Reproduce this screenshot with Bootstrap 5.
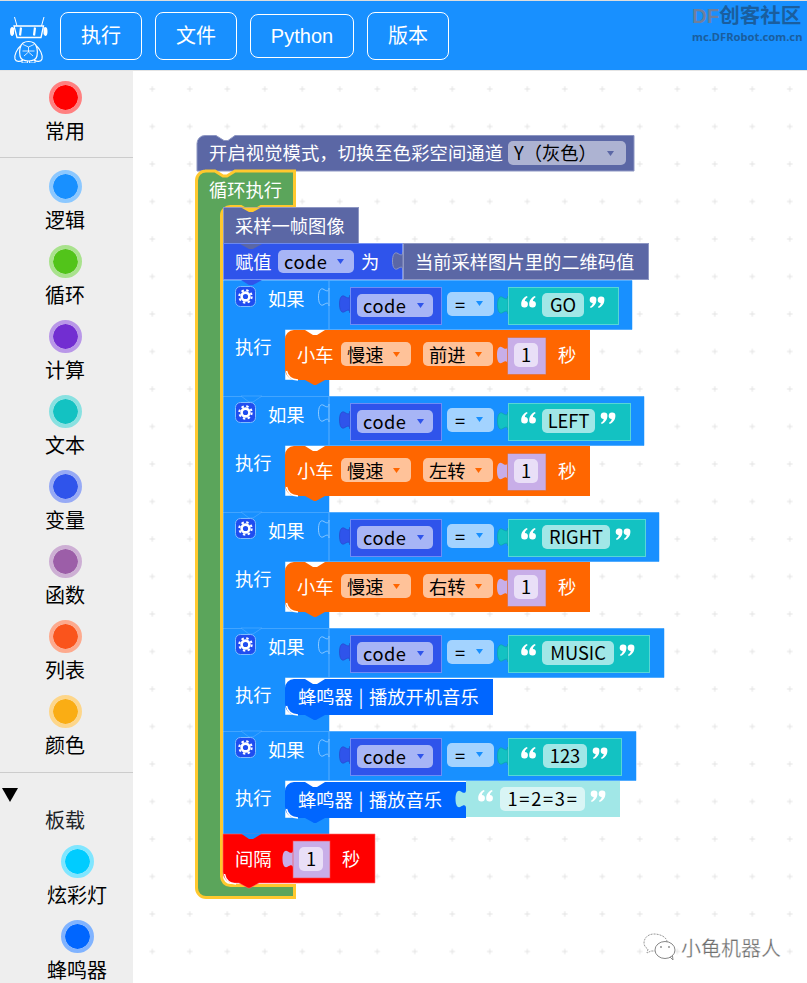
<!DOCTYPE html>
<html lang="zh">
<head>
<meta charset="utf-8">
<title>Mind+</title>
<link href="https://cdn.jsdelivr.net/npm/bootstrap@5.3.0/dist/css/bootstrap.min.css" rel="stylesheet">
<style>
html,body{height:983px;overflow:hidden;background:#fff}
body{font-family:"Liberation Sans","Noto Sans CJK SC",sans-serif;border-top:1px solid #ddd}
.topbar{height:69px;background:#1890ff;border-bottom:0;padding:0;flex-wrap:nowrap;position:relative}
.brand-logo{width:40px;height:50px;margin:5px 11px 0 9px;flex:none;display:block}
.tool-btn{font-size:20px;color:#fff;border:1px solid #fff;border-radius:8px;height:48px;width:82px;padding:0;background:#1890ff;line-height:46px;margin-right:13px;flex:none}
.tool-btn.py{width:104px;height:44px;line-height:42px}
.wm-box{position:absolute;left:692px;top:2px;line-height:1;white-space:nowrap;font-weight:700}
.wm-title{font-size:20.5px;color:#1a5e9e;line-height:26px}
.wm-title b{color:#6f7f9c}
.wm-sub{font-size:11.2px;color:#1a5e9e;margin-top:2px;font-family:"Noto Sans","Liberation Sans",sans-serif}
.main-row{height:913px;border-top:1px solid #e4e4e4}
.cat-side{width:133px;height:913px;background:#eee;overflow:hidden;flex:none}
.cat-item{height:75px;padding:9.5px 3px 0 0;text-align:center;color:#000}
.cat-item.sub{padding-left:24px}
.cat-dot{display:block;width:33px;height:33px;border-radius:50%;border:4px solid;margin:0 auto 2.5px;background-clip:padding-box}
.cat-label{display:block;font-size:20px;line-height:30px;white-space:nowrap;font-family:"Noto Sans CJK SC",sans-serif}
.cat-line{height:1px;background:#ccc}
.gap-first{margin:11px 0 2px}
.gap-second{margin-top:12px}
.cat-tri{width:0;height:0;border-left:8px solid transparent;border-right:8px solid transparent;border-top:14px solid #000;margin:15px 0 3px 2px}
.board-label{text-align:center;font-size:20px;line-height:30px;padding-right:3px;font-family:"Noto Sans CJK SC",sans-serif}
.d1{background-color:#f00;border-color:#ff8080}
.d2{background-color:#1890ff;border-color:#8cc8ff}
.d3{background-color:#52c41a;border-color:#a9e28d}
.d4{background-color:#722ed1;border-color:#b997e8}
.d5{background-color:#13c2c2;border-color:#89e1e1}
.d6{background-color:#2f54eb;border-color:#97aaf5}
.d7{background-color:#9c5ea8;border-color:#cdafd4}
.d8{background-color:#fa541c;border-color:#fdaa8e}
.d9{background-color:#faad14;border-color:#fdd68a}
.d10{background-color:#0cf;border-color:#80e6ff}
.d11{background-color:#06f;border-color:#80b3ff}
.canvas-wrap{flex:1 1 auto;min-width:0;height:913px;position:relative;background:#fff}
.canvas-svg{display:block;width:674px;height:913px}
.bt{font:18.3px "Noto Sans CJK SC",sans-serif;fill:#fff;word-spacing:1.5px}
.ft{font:18.3px "Noto Sans CJK SC",sans-serif;fill:#000;text-anchor:middle}
.fl{font:18.3px "Noto Sans CJK SC",sans-serif;fill:#000}
.codeword{letter-spacing:.5px}
.wide-eq{letter-spacing:1.7px}
.wm-text{font:20px "Noto Sans CJK SC",sans-serif;fill:#707070;stroke:#fff;stroke-width:.25}
</style>
</head>
<body class="m-0">
<nav class="navbar topbar d-flex justify-content-start align-items-center">
  <svg class="brand-logo" viewBox="0 0 40 50" fill="none" stroke="#fff" stroke-width="1.2" aria-label="logo">
    <path d="M5.500 4 8 13M35 4 32.500 13" stroke-width="1"/>
    <path d="M5 13H34.500L32 24.500H8Z" stroke-width="1.300"/>
    <path d="M3.500 14C1.500 14 1 16 1 18.500S1.500 23 3.500 23L5 21V15ZM36 14C38 14 38.500 16 38.500 18.500S38 23 36 23L34.500 21V15Z" fill="#fff" stroke="none"/>
    <path d="M12 14.500 11 22.500M26 14.500 25 22.500" stroke-width="2.200"/>
    <path d="M14 30C11 32 10 38 11 43 12 47 15 48 19.500 48S27 47 28 43C29 38 28 32 25 30 22 28 17 28 14 30Z"/>
    <path d="M14 31.500 19.500 34 25 31.500M13.500 38H25.500M15 43 19.500 39 24 43M19.500 34V39" stroke-width=".8"/>
    <path d="M11.500 33C8 36 5 42 6 46 7 49 11 49 14 47M27.500 33C31 36 34 42 33 46 32 49 28 49 25 47"/>
    <path d="M13 47V50H18.500V48M26 47V50H20.500V48" stroke-width=".9"/>
  </svg>
  <button type="button" class="btn tool-btn">执行</button>
  <button type="button" class="btn tool-btn">文件</button>
  <button type="button" class="btn tool-btn py">Python</button>
  <button type="button" class="btn tool-btn">版本</button>
  <div class="wm-box"><div class="wm-title"><b>DF</b>创客社区</div><div class="wm-sub">mc.DFRobot.com.cn</div></div>
</nav>
<div class="d-flex main-row">
  <aside class="cat-side">
    <div class="cat-item"><span class="cat-dot d1"></span><span class="cat-label">常用</span></div>
    <div class="cat-line gap-first"></div>
    <div class="cat-item"><span class="cat-dot d2"></span><span class="cat-label">逻辑</span></div>
    <div class="cat-item"><span class="cat-dot d3"></span><span class="cat-label">循环</span></div>
    <div class="cat-item"><span class="cat-dot d4"></span><span class="cat-label">计算</span></div>
    <div class="cat-item"><span class="cat-dot d5"></span><span class="cat-label">文本</span></div>
    <div class="cat-item"><span class="cat-dot d6"></span><span class="cat-label">变量</span></div>
    <div class="cat-item"><span class="cat-dot d7"></span><span class="cat-label">函数</span></div>
    <div class="cat-item"><span class="cat-dot d8"></span><span class="cat-label">列表</span></div>
    <div class="cat-item"><span class="cat-dot d9"></span><span class="cat-label">颜色</span></div>
    <div class="cat-line gap-second"></div>
    <div class="cat-tri"></div>
    <div class="board-label">板载</div>
    <div class="cat-item sub"><span class="cat-dot d10"></span><span class="cat-label">炫彩灯</span></div>
    <div class="cat-item sub"><span class="cat-dot d11"></span><span class="cat-label">蜂鸣器</span></div>
  </aside>
  <div class="canvas-wrap">
    <svg class="canvas-svg" viewBox="133 71 674 913" xmlns="http://www.w3.org/2000/svg">
      <defs>
        <pattern id="gridp" x="133.55" y="70.25" width="37.5" height="37.5" patternUnits="userSpaceOnUse">
          <path d="M16 18.750H21.500M18.750 16V21.500" stroke="#e4e4e4" stroke-width="1"/>
        </pattern>
        <path id="tab" d="M0 0C0 4-3 3-5 1.500-9-1-10.500 4-10.500 9S-9 19-5 16.500C-3 15 0 14 0 18Z"/>
        <symbol id="qL" viewBox="0 0 16 12" overflow="visible">
          <path d="M3.400 11.500A3.200 3.200 0 0 1 .2 8.200C.2 4.500 2.500 1.200 6 0L6.600 1.200C4.800 2.300 4 3.500 3.900 5A3.200 3.200 0 0 1 3.400 11.500ZM11.400 11.500A3.200 3.200 0 0 1 8.200 8.200C8.200 4.500 10.500 1.200 14 0L14.600 1.200C12.800 2.300 12 3.500 11.900 5A3.200 3.200 0 0 1 11.400 11.500Z" fill="#fff"/>
        </symbol>
        <symbol id="qR" viewBox="0 0 16 12" overflow="visible">
          <path d="M11.200 .5A3.200 3.200 0 0 1 14.400 3.800C14.400 7.500 12.100 10.800 8.600 12L8 10.800C9.800 9.700 10.600 8.500 10.700 7A3.200 3.200 0 0 1 11.200 .5ZM3.200 .5A3.200 3.200 0 0 1 6.400 3.800C6.400 7.500 4.100 10.800 .6 12L0 10.800C1.800 9.700 2.600 8.500 2.700 7A3.200 3.200 0 0 1 3.200 .5Z" fill="#fff"/>
        </symbol>
        <g id="gear">
          <rect x="235.500" y="286.500" width="20" height="20" rx="5" fill="#1f4df0" stroke="#7fbcff"/>
          <circle cx="245.500" cy="296.500" r="6.200" fill="none" stroke="#fff" stroke-width="2" stroke-dasharray="2.400 2.470"/>
          <circle cx="245.500" cy="296.500" r="3.900" fill="none" stroke="#fff" stroke-width="2.600"/>
        </g>
        <g id="ifcommon">
          <use href="#gear"/>
          <text class="bt" x="268" y="305.500">如果</text>
          <text class="bt" x="235" y="353.500">执行</text>
          <use href="#tab" x="329" y="288" fill="#1890ff" stroke="#8fcbff"/>
          <path d="M329 280.500V329" stroke="#59aeff" fill="none"/>
          <use href="#tab" x="350" y="295" fill="#2f54eb" stroke="#2748c8" stroke-width=".7"/>
          <rect x="350.500" y="287.500" width="91" height="37" fill="#2f54eb" stroke="#6f8df5"/>
          <rect x="357" y="294" width="76" height="23" rx="5" fill="#a7b5f6"/>
          <text class="fl codeword" x="363" y="312.500">code</text>
          <path d="M417 303H424L420.500 308Z" fill="#2f54eb"/>
          <rect x="447" y="292" width="47" height="24" rx="5" fill="#a3d3ff"/>
          <text class="fl" x="455" y="311.500">=</text>
          <path d="M476 301H483L479.500 306Z" fill="#1890ff"/>
          <use href="#tab" x="508" y="296" fill="#13c2c2" stroke="#0fa3a3" stroke-width=".7"/>
        </g>
        <g id="carctl">
          <text class="bt" x="297" y="361.500">小车</text>
          <rect x="341" y="342" width="70" height="24" rx="5" fill="#ffc299"/>
          <text class="fl" x="347" y="361.500">慢速</text>
          <path d="M393 352H400L396.500 357Z" fill="#f60"/>
          <rect x="423" y="342" width="70" height="24" rx="5" fill="#ffc299"/>
          <path d="M475 352H482L478.500 357Z" fill="#f60"/>
          <use href="#tab" x="507.500" y="346" fill="#c8aee8"/>
          <rect x="507.500" y="337.500" width="38.500" height="37" fill="#c8aee8" stroke="#e06a2a" stroke-width=".6"/>
          <rect x="514" y="343" width="24" height="24" rx="5" fill="#e9dff7"/>
          <text class="ft" x="526" y="361.500">1</text>
          <text class="bt" x="558" y="361.500">秒</text>
        </g>
      </defs>

      <rect x="133" y="71" width="674" height="913" fill="url(#gridp)"/>

      <!-- top block -->
      <path d="M205 135.500H216L224 140.500H228L235 135.500H634V171H197V143.500A8 8 0 0 1 205 135.500Z" fill="#5b67a5" stroke="#8e97c3" stroke-width="1"/>
      <text class="bt" x="209" y="159.500" textLength="294">开启视觉模式，切换至色彩空间通道</text>
      <rect x="508" y="141" width="118" height="24" rx="5" fill="#adb3d2"/>
      <text class="fl" x="514" y="159.500">Y（灰色）</text>
      <path d="M607 151H614L610.500 156Z" fill="#5b67a5"/>

      <!-- loop -->
      <path d="M205 171H215L223 176H227L235 171H294.500V206.500H261L253 211H249L241 206.500H231A9 9 0 0 0 221.500 215.500V876A9 9 0 0 0 231 885.500H294.500V897.500H206A9.500 9.500 0 0 1 196.500 888V180.500A9.500 9.500 0 0 1 206 171Z" fill="#5ba55b" stroke="#ffc82e" stroke-width="3"/>
      <text class="bt" x="209" y="196.500">循环执行</text>

      <!-- assign chain -->
      <rect x="223.500" y="207.500" width="135" height="36" fill="#5b67a5" stroke="#8e97c3"/>
      <path d="M231 207.500H241L249 212H253L261 207.500H231Z" fill="#ffc82e"/>
      <text class="bt" x="235" y="232.500">采样一帧图像</text>

      <rect x="223.500" y="243.500" width="179" height="36" fill="#2f54eb" stroke="#6f8df5" stroke-width=".8"/>
      <path d="M240 244H262L253 249H249Z" fill="#5b67a5"/>
      <text class="bt" x="235" y="268.500">赋值</text>
      <rect x="278" y="250" width="76" height="23" rx="5" fill="#a7b5f6"/>
      <text class="fl codeword" x="284" y="268.500">code</text>
      <path d="M337 259H344L340.500 264Z" fill="#2f54eb"/>
      <text class="bt" x="361" y="268.500">为</text>
      <rect x="403.500" y="243.500" width="245" height="36" fill="#5b67a5" stroke="#8e97c3"/>
      <use href="#tab" x="403" y="252" fill="#5b67a5" stroke="#8e97c3"/>
      <text class="bt" x="415" y="268.500">当前采样图片里的二维码值</text>

      <!-- if 1 -->
      <g>
        <path d="M223.500 280.500H632V329.500H285V380H329V396H223.500Z" fill="#1890ff" stroke="#1890ff" stroke-width=".5"/>
        <path d="M241 280H262L253 285H249Z" fill="#2f54eb"/>
        <use href="#ifcommon"/>
        <rect x="508.500" y="287.500" width="110" height="37" fill="#13c2c2" stroke="#57d6d6"/>
        <use href="#qL" x="521" y="296" width="16" height="12"/>
        <rect x="542" y="293" width="42" height="24" rx="5" fill="#a1e7e7"/>
        <text class="ft" x="563" y="312">GO</text>
        <use href="#qR" x="590" y="296" width="16" height="12"/>
        <path d="M294 330H305L313 335H317L325 330H590V380H325L316 385H314L305 380H296A11 11 0 0 1 285 369V339A9 9 0 0 1 294 330Z" fill="#f60"/>
        <path d="M286.500 371Q288 379.500 298 380" stroke="#fff" fill="none" stroke-width="1.500"/>
        <use href="#carctl"/>
        <text class="fl" x="429" y="361.500">前进</text>
      </g>
      <!-- if 2 -->
      <g transform="translate(0 116)">
        <path d="M223.500 280.500H644V329.500H285V380H329V396H223.500Z" fill="#1890ff" stroke="#1890ff" stroke-width=".5"/>
        <path d="M241 280H262L253 286H249Z" fill="#1890ff" stroke="#59aeff" stroke-width=".6"/>
        <use href="#ifcommon"/>
        <rect x="508.500" y="287.500" width="122" height="37" fill="#13c2c2" stroke="#57d6d6"/>
        <use href="#qL" x="521" y="296" width="16" height="12"/>
        <rect x="542" y="293" width="53" height="24" rx="5" fill="#a1e7e7"/>
        <text class="ft" x="568.500" y="312">LEFT</text>
        <use href="#qR" x="601" y="296" width="16" height="12"/>
        <path d="M294 330H305L313 335H317L325 330H590V380H325L316 385H314L305 380H296A11 11 0 0 1 285 369V339A9 9 0 0 1 294 330Z" fill="#f60"/>
        <path d="M286.500 371Q288 379.500 298 380" stroke="#fff" fill="none" stroke-width="1.500"/>
        <use href="#carctl"/>
        <text class="fl" x="429" y="361.500">左转</text>
      </g>
      <!-- if 3 -->
      <g transform="translate(0 232)">
        <path d="M223.500 280.500H659V329.500H285V380H329V396H223.500Z" fill="#1890ff" stroke="#1890ff" stroke-width=".5"/>
        <path d="M241 280H262L253 286H249Z" fill="#1890ff" stroke="#59aeff" stroke-width=".6"/>
        <use href="#ifcommon"/>
        <rect x="508.500" y="287.500" width="137" height="37" fill="#13c2c2" stroke="#57d6d6"/>
        <use href="#qL" x="521" y="296" width="16" height="12"/>
        <rect x="542" y="293" width="68" height="24" rx="5" fill="#a1e7e7"/>
        <text class="ft" x="576" y="312">RIGHT</text>
        <use href="#qR" x="616" y="296" width="16" height="12"/>
        <path d="M294 330H305L313 335H317L325 330H590V380H325L316 385H314L305 380H296A11 11 0 0 1 285 369V339A9 9 0 0 1 294 330Z" fill="#f60"/>
        <path d="M286.500 371Q288 379.500 298 380" stroke="#fff" fill="none" stroke-width="1.500"/>
        <use href="#carctl"/>
        <text class="fl" x="429" y="361.500">右转</text>
      </g>
      <!-- if 4 -->
      <g transform="translate(0 348)">
        <path d="M223.500 280.500H664V329.500H285V367H329V383H223.500Z" fill="#1890ff" stroke="#1890ff" stroke-width=".5"/>
        <path d="M241 280H262L253 286H249Z" fill="#1890ff" stroke="#59aeff" stroke-width=".6"/>
        <use href="#ifcommon"/>
        <rect x="508.500" y="287.500" width="141" height="37" fill="#13c2c2" stroke="#57d6d6"/>
        <use href="#qL" x="521" y="296" width="16" height="12"/>
        <rect x="542" y="293" width="72" height="24" rx="5" fill="#a1e7e7"/>
        <text class="ft" x="578" y="312">MUSIC</text>
        <use href="#qR" x="620" y="296" width="16" height="12"/>
        <path d="M294 331H305L313 336H317L325 331H493V367H325L316 372H314L305 367H296A11 11 0 0 1 285 356V340A9 9 0 0 1 294 331Z" fill="#06f"/>
        <path d="M286.500 358Q288 366.500 298 367" stroke="#fff" fill="none" stroke-width="1.500"/>
        <text class="bt" x="298" y="355.500">蜂鸣器 | 播放开机音乐</text>
      </g>
      <!-- if 5 -->
      <g transform="translate(0 451)">
        <path d="M223.500 280.500H636V329.500H285V367H329V383H223.500Z" fill="#1890ff" stroke="#1890ff" stroke-width=".5"/>
        <path d="M241 280H262L253 286H249Z" fill="#1890ff" stroke="#59aeff" stroke-width=".6"/>
        <use href="#ifcommon"/>
        <rect x="508.500" y="287.500" width="113" height="37" fill="#13c2c2" stroke="#57d6d6"/>
        <use href="#qL" x="521" y="296" width="16" height="12"/>
        <rect x="543" y="293" width="44" height="24" rx="5" fill="#a1e7e7"/>
        <text class="ft" x="565" y="312">123</text>
        <use href="#qR" x="593" y="296" width="16" height="12"/>
        <path d="M294 331H305L313 336H317L325 331H466V367H325L316 372H314L305 367H296A11 11 0 0 1 285 356V340A9 9 0 0 1 294 331Z" fill="#06f"/>
        <path d="M286.500 358Q288 366.500 298 367" stroke="#fff" fill="none" stroke-width="1.500"/>
        <text class="bt" x="298" y="355.500">蜂鸣器 | 播放音乐</text>
        <rect x="466" y="330" width="154" height="36" fill="#a1e7e7"/>
        <use href="#tab" x="466" y="339" fill="#a1e7e7"/>
        <use href="#qL" x="478" y="339" width="16" height="12"/>
        <rect x="500" y="336" width="85" height="24" rx="5" fill="#d9f5f5"/>
        <text class="ft wide-eq" x="543" y="355">1=2=3=</text>
        <use href="#qR" x="591" y="339" width="16" height="12"/>
      </g>
      <!-- delay -->
      <path d="M223 834H375V883H259L250 888H248L239 883H234A11 11 0 0 1 223 872Z" fill="#f00" stroke="#ff6a6a" stroke-width=".6"/>
      <path d="M241 833.500H262L253 839H249Z" fill="#1890ff"/>
      <path d="M224.500 874Q226 883 236 884" stroke="#fff" fill="none" stroke-width="1.500"/>
      <text class="bt" x="235" y="865.500">间隔</text>
      <use href="#tab" x="293" y="850" fill="#c8aee8"/>
      <rect x="293" y="841" width="37" height="37" fill="#c8aee8" stroke="#f44" stroke-width=".6"/>
      <rect x="299" y="847" width="24" height="24" rx="5" fill="#e9dff7"/>
      <text class="ft" x="311" y="865.500">1</text>
      <text class="bt" x="342" y="865.500">秒</text>

      <!-- wechat mark -->
      <g fill="none" stroke="#999" stroke-width="1">
        <path d="M667 942C667 937 660 934 654 934 648 934 644 938 644 943 644 946 646 948 648 949L647 953 651 951C652 951 654 951 655 951" stroke-dasharray="2 1"/>
        <ellipse cx="665" cy="950" rx="10" ry="8.500" stroke="#888"/>
        <path d="M670 957 673 960 672.500 956" stroke="#888"/>
      </g>
      <circle cx="661" cy="947" r=".9" fill="#888"/><circle cx="669" cy="947" r=".9" fill="#888"/>
      <text class="wm-text" x="681" y="956">小龟机器人</text>
    </svg>
  </div>
</div>
</body>
</html>
